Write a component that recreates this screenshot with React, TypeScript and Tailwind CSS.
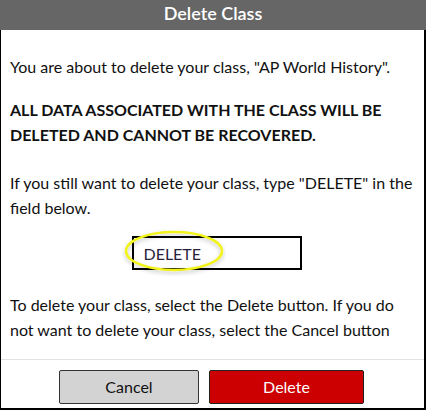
export default function App() {
  return (
    <div className="w-[426px] h-[410px] bg-white font-['Lato','Liberation_Sans',sans-serif] text-[#111]">
      <div className="h-[30px] bg-[#666666] flex items-start justify-center pt-[1px]">
        <h1 className="text-white text-[18px] font-semibold leading-[24px]">Delete Class</h1>
      </div>
      <div className="relative h-[380px] border-l border-r-2 border-b-2 border-black flex flex-col">
        <div className="px-[9px] pt-[24px] text-[16px] leading-[25px]">
          <p>You are about to delete your class, "AP World History".</p>
          <p className="mt-[18px] font-bold">ALL DATA ASSOCIATED WITH THE CLASS WILL BE DELETED AND CANNOT BE RECOVERED.</p>
          <p className="mt-[23px]">If you still want to delete your class, type "DELETE" in the field below.</p>
          <div className="mt-[16px] flex justify-center pl-[8px]">
            <div className="relative w-[170px] h-[34px] border-2 border-black flex items-center px-[10px] text-[#2a1f3d]">
              DELETE
              <svg className="absolute left-[-12px] top-[-10px]" width="104" height="48" viewBox="0 0 104 48">
                <defs>
                  <filter id="sh" x="-20%" y="-20%" width="140%" height="140%">
                    <feDropShadow dx="0" dy="2" stdDeviation="2" floodColor="#000" floodOpacity="0.25" />
                  </filter>
                </defs>
                <ellipse cx="52" cy="23" rx="48" ry="19" fill="none" stroke="#f2f21a" strokeWidth="2.5" filter="url(#sh)" />
              </svg>
            </div>
          </div>
          <p className="mt-[22px]">To delete your class, select the Delete button. If you do not want to delete your class, select the Cancel button</p>
        </div>
        <div className="mt-auto border-t border-[#e2e2e2] h-[49px] flex justify-center gap-[10px] pt-[10px] pr-[2px]">
          <button className="w-[140px] h-[34px] bg-[#d3d3d3] border border-[#333] rounded-[2px] text-[16px]">Cancel</button>
          <button className="w-[155px] h-[34px] bg-[#cc0000] border border-[#222] rounded-[2px] text-white text-[16px]">Delete</button>
        </div>
      </div>
    </div>
  );
}
